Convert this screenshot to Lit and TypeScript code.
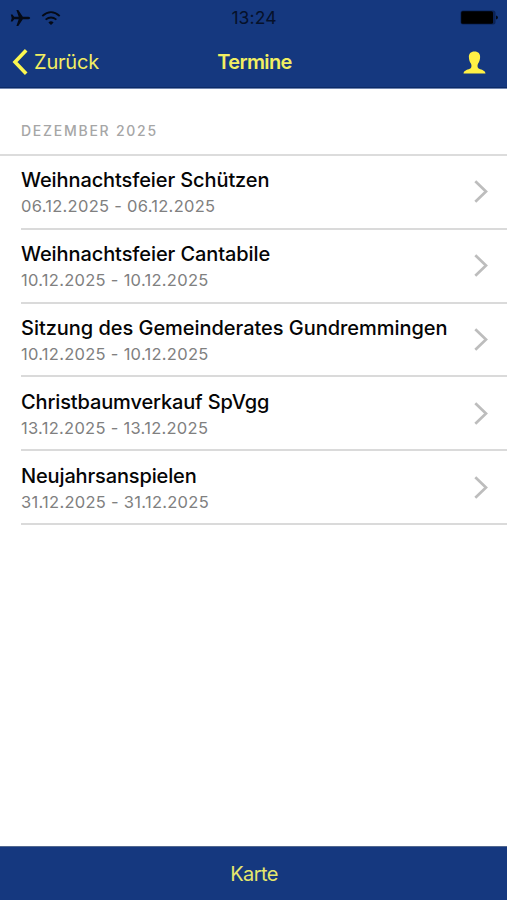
import { LitElement, html, css } from "lit";
import { customElement } from "lit/decorators.js";
import { styleMap } from "lit/directives/style-map.js";

interface Termin {
  title: string;
  date: string;
  tracking: number;
}

const TERMINE: Termin[] = [
  { title: "Weihnachtsfeier Schützen", date: "06.12.2025 - 06.12.2025", tracking: -0.1 },
  { title: "Weihnachtsfeier Cantabile", date: "10.12.2025 - 10.12.2025", tracking: -0.09 },
  { title: "Sitzung des Gemeinderates Gundremmingen", date: "10.12.2025 - 10.12.2025", tracking: -0.04 },
  { title: "Christbaumverkauf SpVgg", date: "13.12.2025 - 13.12.2025", tracking: -0.13 },
  { title: "Neujahrsanspielen", date: "31.12.2025 - 31.12.2025", tracking: -0.14 },
];

@customElement("app-root")
export class AppRoot extends LitElement {
  static styles = css`
    :host {
      display: flex;
      flex-direction: column;
      width: 507px;
      height: 900px;
      box-sizing: border-box;
      overflow: hidden;
      background: #fff;
      font-family: Inter, "Liberation Sans", sans-serif;
      color: #050505;
    }
    .top {
      height: 89px;
      flex: none;
      box-sizing: border-box;
      background: #15387f;
      border-bottom: 1px solid #7186b0;
      box-shadow: inset 0 -1px 0 #0c2a66;
    }
    .status {
      display: grid;
      grid-template-columns: 1fr auto 1fr;
      align-items: center;
      height: 34px;
      padding: 0 9px 0 10px;
    }
    .signals {
      display: flex;
      align-items: center;
      gap: 10px;
    }
    .clock {
      font-size: 17.5px;
      line-height: 34px;
      letter-spacing: 0.1px;
      padding-top: 1px;
      color: #06112a;
    }
    .battery {
      justify-self: end;
    }
    .nav {
      display: grid;
      grid-template-columns: 1fr auto 1fr;
      align-items: center;
      height: 56px;
      padding: 0 21px 0 12px;
      color: #f2ee62;
    }
    .back {
      display: flex;
      align-items: center;
      gap: 6px;
      font-size: 20px;
      letter-spacing: -0.2px;
    }
    .heading {
      font-size: 20px;
      font-weight: 600;
      letter-spacing: -0.6px;
      padding-left: 11px;
    }
    .person {
      justify-self: end;
    }
    svg {
      display: block;
    }
    main {
      flex: 1;
    }
    .month {
      height: 67px;
      box-sizing: border-box;
      padding: 32px 0 0 21px;
      font-size: 14px;
      line-height: 20px;
      font-weight: 500;
      letter-spacing: 1.75px;
      color: #a6a6a6;
      border-bottom: 2px solid #dcdcdc;
    }
    .row {
      display: flex;
      align-items: center;
      height: 73.8px;
      box-sizing: border-box;
      margin-left: 21px;
      padding-right: 19px;
      border-bottom: 2px solid #dadada;
    }
    .text {
      flex: 1;
      padding-top: 3px;
    }
    .title {
      font-size: 20px;
      line-height: 26px;
      font-weight: 500;
      white-space: nowrap;
    }
    .date {
      font-size: 16.5px;
      line-height: 26px;
      color: #808080;
      letter-spacing: 0.28px;
      white-space: nowrap;
    }
    footer {
      height: 54px;
      flex: none;
      box-sizing: border-box;
      display: flex;
      justify-content: center;
      align-items: center;
      padding-left: 1px;
      background: #15387f;
      border-top: 1px solid #52688f;
      color: #e6e66c;
      font-size: 20px;
      letter-spacing: -0.6px;
    }
  `;

  render() {
    return html`
      <header class="top">
        <div class="status">
          <div class="signals">
            <svg width="21" height="20" viewBox="0 0 21 20">
              <path fill="#050a16" d="M20.200 10c0-.8-1.400-1.300-2.800-1.300h-4.600L8.300 2H6.400L8.700 8.700H4.200L2.500 6.500H.8L1.700 10 .8 13.500h1.700l1.700-2.200h4.500L6.400 18h1.900l4.500-6.700h4.600c1.400 0 2.800-.5 2.800-1.300z" />
            </svg>
            <svg width="20" height="16" viewBox="0 0 20 16" fill="none" stroke="#050a16" stroke-width="1.800">
              <path d="M1.300 6Q10-1.800 18.700 6M4.600 9.600Q10 5.400 15.400 9.600" />
              <path fill="#050a16" stroke="none" d="M10 15L7.400 12.400Q10 10 12.600 12.400z" />
            </svg>
          </div>
          <div class="clock">13:24</div>
          <svg class="battery" width="38" height="15" viewBox="0 0 38 15">
            <rect x="0.500" y="0.500" width="35" height="14" rx="2.500" fill="#0b2357" />
            <rect x="1.200" y="1.200" width="31.800" height="12.600" rx="1.500" fill="#000" />
            <path d="M36 5.500q2 .6 2 2T36 9.500z" fill="#050a16" />
          </svg>
        </div>
        <nav class="nav">
          <div class="back">
            <svg width="16" height="26" viewBox="0 0 16 26" fill="none" stroke="#fbf750" stroke-width="3.600">
              <path d="M14.200 1.300L3 13l11.200 11.700" />
            </svg>
            <span>Zurück</span>
          </div>
          <div class="heading">Termine</div>
          <svg class="person" width="23" height="23" viewBox="0 0 23 23" fill="#fff145">
            <path d="M11.500.5C7.600.5 5.700 2.900 5.900 6.300c.1 2.500.8 4.700 2 6.300.8 1.200.8 3.900-.2 4.700C5.600 18.700.9 19 .5 22.500h22c-.4-3.500-5.100-3.800-7.200-5.200-1-.8-1-3.500-.2-4.700 1.200-1.600 1.900-3.800 2-6.300C17.300 2.900 15.400.5 11.500.5z" />
          </svg>
        </nav>
      </header>
      <main>
        <div class="month">DEZEMBER 2025</div>
        ${TERMINE.map(
          (t) => html`
            <div class="row">
              <div class="text">
                <div class="title" style=${styleMap({ letterSpacing: `${t.tracking}px` })}>${t.title}</div>
                <div class="date">${t.date}</div>
              </div>
              <svg width="14" height="23" viewBox="0 0 14 23" fill="none" stroke="#bdbdbd" stroke-width="2.700">
                <path d="M1.300 1.200L12 11.500 1.300 21.800" />
              </svg>
            </div>
          `
        )}
      </main>
      <footer>Karte</footer>
    `;
  }
}
